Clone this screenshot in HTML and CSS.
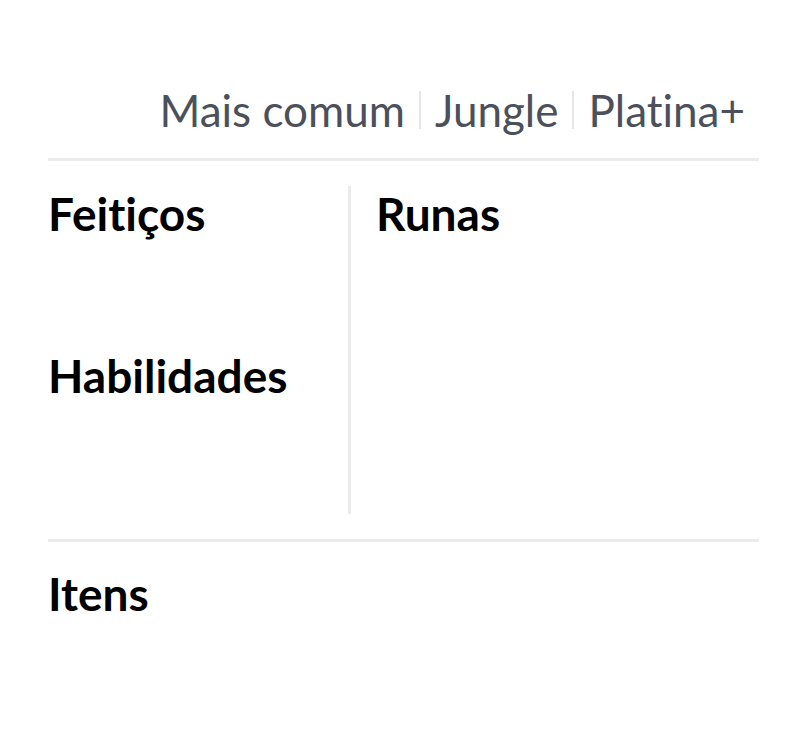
FILE: index.html
```html
<!DOCTYPE html>
<html lang="pt">
<head>
<meta charset="utf-8">
<link rel="stylesheet" href="styles.css">
</head>
<body>
<div class="page">
  <div class="filters">
    <span class="filter">Mais comum</span>
    <span class="sep"></span>
    <span class="filter">Jungle</span>
    <span class="sep"></span>
    <span class="filter">Platina+</span>
  </div>
  <div class="top">
    <div class="left">
      <h2 class="title">Feitiços</h2>
      <h2 class="title skills">Habilidades</h2>
    </div>
    <div class="right">
      <h2 class="title">Runas</h2>
    </div>
  </div>
  <div class="items">
    <h2 class="title">Itens</h2>
  </div>
</div>
</body>
</html>
```

FILE: styles.css
```css
html, body {
  margin: 0;
  padding: 0;
  background: #fff;
}
body {
  font-family: Lato, "Noto Sans", sans-serif;
  font-variant-ligatures: none;
}
.page {
  width: 711px;
  margin-left: 48px;
  padding-top: 84px;
}
.filters {
  display: flex;
  justify-content: flex-end;
  align-items: center;
  padding-right: 14px;
  padding-bottom: 22px;
  border-bottom: 3px solid #ebebeb;
}
.filter {
  font-size: 44px;
  line-height: 52px;
  color: #4b505b;
}
.sep {
  width: 2px;
  height: 38px;
  background: #e6e6e6;
  margin: 0 14px;
}
.top {
  display: flex;
  padding-top: 25px;
  padding-bottom: 25px;
  border-bottom: 3px solid #ebebeb;
}
.left {
  width: 300px;
  height: 328px;
  border-right: 3px solid #ebebeb;
}
.right {
  padding-left: 25px;
}
.title {
  margin: 0;
  font-size: 46px;
  font-weight: 700;
  line-height: 56px;
  color: #000;
}
.skills {
  margin-top: 106px;
}
.items {
  padding-top: 24px;
}
```
